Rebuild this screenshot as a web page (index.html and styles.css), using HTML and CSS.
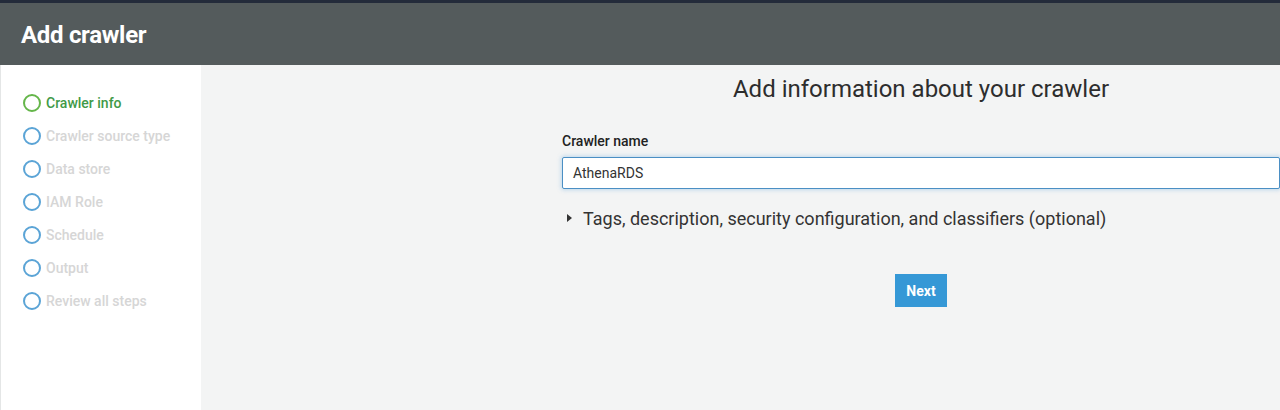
FILE: index.html
```html
<!DOCTYPE html>
<html>
<head>
<meta charset="utf-8">
<title>Add crawler</title>
<link rel="stylesheet" href="styles.css">
</head>
<body>
<div class="topbar"></div>
<header class="header"><h1>Add crawler</h1></header>
<div class="layout">
  <nav class="steps">
    <div class="step active"><span class="dot"></span><span>Crawler info</span></div>
    <div class="step"><span class="dot"></span><span>Crawler source type</span></div>
    <div class="step"><span class="dot"></span><span>Data store</span></div>
    <div class="step"><span class="dot"></span><span>IAM Role</span></div>
    <div class="step"><span class="dot"></span><span>Schedule</span></div>
    <div class="step"><span class="dot"></span><span>Output</span></div>
    <div class="step"><span class="dot"></span><span>Review all steps</span></div>
  </nav>
  <main class="main">
    <div class="spacer"></div>
    <div class="form">
      <h2 class="title">Add information about your crawler</h2>
      <label class="label">Crawler name</label>
      <div class="input">AthenaRDS</div>
      <div class="expander"><span class="caret"></span><span>Tags, description, security configuration, and classifiers (optional)</span></div>
      <div class="actions"><button class="btn">Next</button></div>
    </div>
  </main>
</div>
</body>
</html>
```

FILE: styles.css
```css
* { box-sizing: border-box; }
html, body { margin: 0; padding: 0; }
body {
  font-family: Roboto, "Noto Sans", sans-serif;
  background: #f3f4f4;
  width: 1280px;
  height: 410px;
  overflow: hidden;
  display: flex;
  flex-direction: column;
}
.topbar { height: 3px; background: #232b3a; }
.header {
  height: 62px;
  background: #545b5c;
  display: flex;
  align-items: center;
  padding-left: 21px;
}
.header h1 {
  margin: 0;
  color: #fff;
  font-size: 24px;
  font-weight: 700;
  letter-spacing: -0.3px;
  position: relative;
  top: 1px;
}
.layout { flex: 1; display: flex; }
.steps {
  width: 201px;
  background: #fff;
  border-left: 1px solid #e4e6e6;
  padding-top: 28px;
  padding-left: 22px;
  display: flex;
  flex-direction: column;
  gap: 13px;
}
.step {
  display: flex;
  align-items: center;
  gap: 5px;
  height: 20px;
  font-size: 14px;
  font-weight: 500;
  color: #d6d6d6;
}
.dot {
  width: 18px;
  height: 18px;
  border: 2px solid #5ba4d6;
  border-radius: 50%;
}
.step.active { color: #3f9a48; }
.step.active .dot { border-color: #65b64a; }
.main { flex: 1; display: flex; }
.spacer { width: 361px; }
.form { width: 718px; display: flex; flex-direction: column; }
.title {
  margin: 10px 0 0;
  text-align: center;
  font-size: 24px;
  font-weight: 400;
  color: #2d2d2d;
  line-height: 28px;
}
.label {
  margin-top: 30px;
  font-size: 14px;
  font-weight: 500;
  color: #222;
  line-height: 16px;
}
.input {
  margin-top: 8px;
  height: 32px;
  background: #fff;
  border: 1px solid #4b8fc4;
  border-radius: 2px;
  box-shadow: 0 0 4px 1px rgba(92, 163, 222, 0.35);
  font-size: 14px;
  color: #333;
  padding-left: 10px;
  display: flex;
  align-items: center;
}
.expander {
  margin-top: 18px;
  display: flex;
  align-items: center;
  gap: 11px;
  padding-left: 5px;
  font-size: 18px;
  color: #333;
  height: 22px;
}
.caret {
  width: 0; height: 0;
  border-top: 4px solid transparent;
  border-bottom: 4px solid transparent;
  border-left: 5px solid #333;
}
.actions { margin-top: 45px; display: flex; justify-content: center; }
.btn {
  width: 52px;
  height: 33px;
  background: #3598d6;
  border: none;
  color: #fff;
  font-family: Roboto, sans-serif;
  font-weight: 700;
  font-size: 14px;
  padding: 0;
  border-radius: 0;
}
```
